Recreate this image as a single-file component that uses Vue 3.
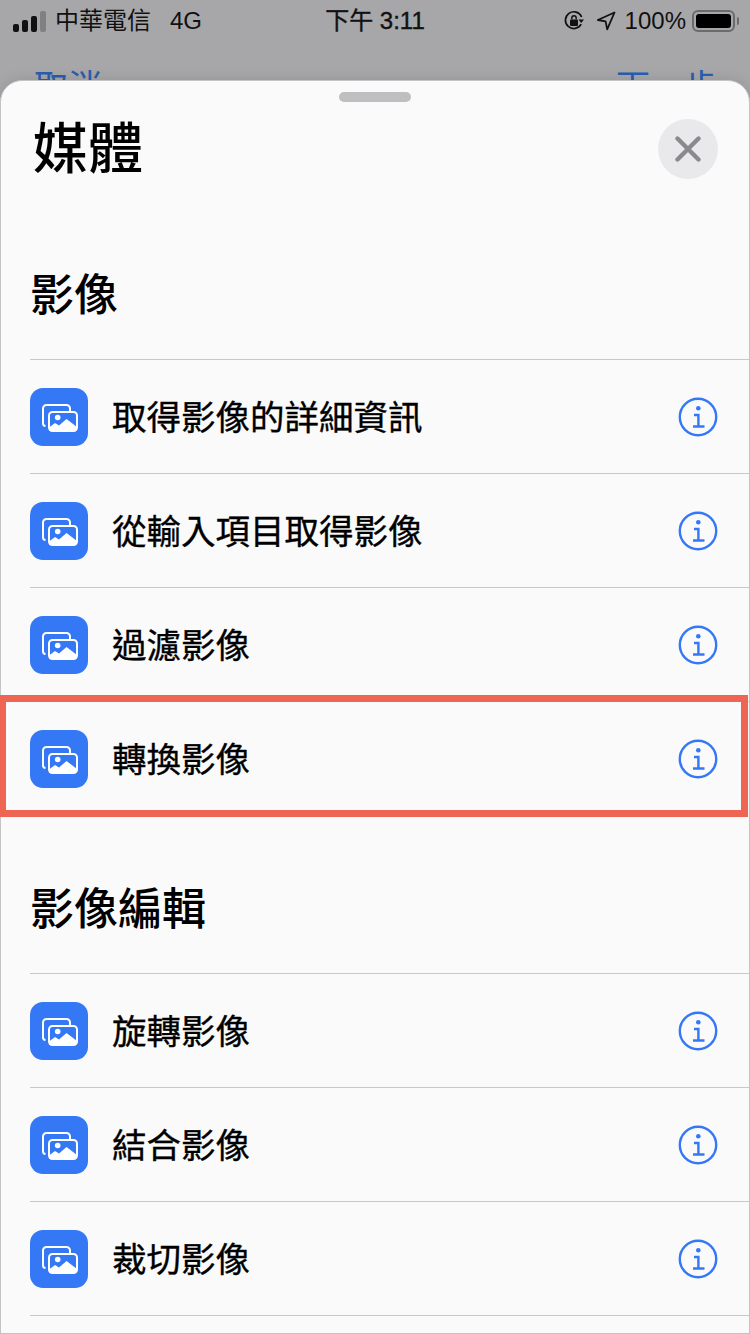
<script setup>
// Feuille "Média" : deux sections d'actions sur une page grisée
const sections = [
  { title: '影像', actions: ['取得影像的詳細資訊', '從輸入項目取得影像', '過濾影像', '轉換影像'] },
  { title: '影像編輯', actions: ['旋轉影像', '結合影像', '裁切影像'] },
]
</script>

<template>
  <div class="page">
    <div class="status">
      <div class="status-left">
        <div class="signal">
          <i class="b1"></i><i class="b2"></i><i class="b3"></i><i class="b4"></i>
        </div>
        <span class="carrier">中華電信</span>
        <span class="net">4G</span>
      </div>
      <div class="clock">下午 3:11</div>
      <div class="status-right">
        <svg class="lock" width="22" height="22" viewBox="0 0 22 22">
          <path d="M18.2 14.2A8.4 8.4 0 1 1 18.6 7" fill="none" stroke="#111" stroke-width="1.7" />
          <path d="M15.4 9.4h5.6l-2.8 3.6z" fill="#111" />
          <rect x="7" y="9.6" width="8" height="6.4" rx="1" fill="#111" />
          <path d="M8.8 9.6V8a2.2 2.2 0 0 1 4.4 0v1.6" fill="none" stroke="#111" stroke-width="1.4" />
        </svg>
        <svg class="arrow" width="20" height="20" viewBox="0 0 20 20">
          <path d="M18.5 1.5 1.8 9l7.8 1.4 1.6 8z" fill="none" stroke="#111" stroke-width="1.8" stroke-linejoin="round" />
        </svg>
        <span class="pct">100%</span>
        <div class="battery"><div class="level"></div></div>
        <div class="nub"></div>
      </div>
    </div>

    <div class="nav">
      <span>取消</span>
      <span>下一步</span>
    </div>

    <div class="sheet">
      <div class="handle"></div>
      <div class="sheet-head">
        <h1>媒體</h1>
        <button class="close">
          <svg width="26" height="26" viewBox="0 0 26 26">
            <path d="M2.5 2.5l21 21M23.5 2.5l-21 21" stroke="#8a8a8e" stroke-width="4.4" stroke-linecap="round" />
          </svg>
        </button>
      </div>

      <section v-for="s in sections" :key="s.title" class="section">
        <h2>{{ s.title }}</h2>
        <div v-for="a in s.actions" :key="a" class="row">
          <div class="app-icon">
            <svg width="38" height="30" viewBox="0 0 38 30">
              <path d="M5.500 24A2.800 2.800 0 0 1 3 21.200V6.500A3.500 3.500 0 0 1 6.500 3h20A3.500 3.500 0 0 1 30 6.500V9" fill="none" stroke="#fff" stroke-width="2" />
              <rect x="9" y="10" width="28" height="19" rx="3.500" fill="#3478f6" stroke="#fff" stroke-width="2" />
              <circle cx="17.700" cy="15.500" r="2.800" fill="#fff" />
              <path d="M9 29v-3.500l6-4.500 4 2.500 7.500-6.500L37 25v1a3 3 0 0 1-3 3z" fill="#fff" />
            </svg>
          </div>
          <span class="label">{{ a }}</span>
          <svg class="info" width="40" height="40" viewBox="0 0 40 40">
            <circle cx="20" cy="20" r="18.200" fill="none" stroke="#3478f6" stroke-width="2.400" />
            <circle cx="20.300" cy="11.300" r="2.300" fill="#3478f6" />
            <path d="M16 18h4.400v11M15 29.500h11.500" fill="none" stroke="#3478f6" stroke-width="2.400" />
          </svg>
        </div>
      </section>
    </div>

    <!-- Cadre rouge de mise en évidence, au-dessus de la liste -->
    <div class="highlight"></div>
  </div>
</template>

<style>
body {
  margin: 0;
  background: #a7a7a9;
}
</style>

<style scoped>
.page {
  position: relative;
  width: 750px;
  height: 1334px;
  overflow: hidden;
  background: #a7a7a9;
  font-family: "Liberation Sans", "Noto Sans CJK TC", sans-serif;
  color: #000;
}

.status {
  height: 42px;
  display: flex;
  align-items: center;
  justify-content: space-between;
  font-size: 24px;
  color: #111;
}

.status-left {
  width: 280px;
  display: flex;
  align-items: center;
  padding-left: 13px;
  box-sizing: border-box;
}

.signal {
  display: flex;
  align-items: flex-end;
  gap: 3px;
  height: 21px;
  margin-right: 9px;
}

.signal i {
  display: block;
  width: 6px;
  border-radius: 2px;
  background: #111;
}

.b1 { height: 8px; }
.b2 { height: 12px; }
.b3 { height: 16px; }
.b4 { height: 21px; background: #808082 !important; }

.carrier {
  font-family: "Noto Sans CJK TC", sans-serif;
  margin-right: 19px;
  margin-bottom: 5px;
}

.clock {
  font-size: 24px;
  white-space: nowrap;
  margin-bottom: 5px;
  -webkit-text-stroke: 0.4px #111;
}

.status-right {
  width: 280px;
  display: flex;
  align-items: center;
  justify-content: flex-end;
  padding-right: 11px;
  box-sizing: border-box;
}

.lock { margin-right: 11px; }
.arrow { margin-right: 9px; }
.pct { margin-right: 6px; font-size: 24px; }

.battery {
  width: 35px;
  height: 14px;
  padding: 2px;
  border: 2px solid #6b6b6d;
  border-radius: 6px;
  box-sizing: content-box;
}

.level {
  height: 100%;
  background: #000;
  border-radius: 3px;
}

.nub {
  width: 2px;
  height: 8px;
  margin-left: 2px;
  background: #6b6b6d;
  border-radius: 0 2px 2px 0;
}

.nav {
  height: 38px;
  overflow: hidden;
  display: flex;
  justify-content: space-between;
  align-items: flex-start;
  padding: 20px 32px 0 34px;
  box-sizing: border-box;
  font-family: "Noto Sans CJK TC", sans-serif;
  font-size: 34px;
  line-height: 46px;
  color: #2a5db0;
}

.sheet {
  height: 1254px;
  box-sizing: border-box;
  background: #fafafa;
  border: 1px solid #c4c4c6;
  border-radius: 22px 22px 0 0;
  box-shadow: 0 0 14px rgba(0, 0, 0, 0.12);
  position: relative;
}

.handle {
  width: 72px;
  height: 10px;
  margin: 11px auto 0;
  border-radius: 5px;
  background: #bfbfc1;
}

.sheet-head {
  display: flex;
  justify-content: space-between;
  align-items: flex-start;
  padding: 17px 31px 0 32px;
  height: 82px;
}

h1 {
  margin: 0;
  font-family: "Noto Sans CJK TC", sans-serif;
  font-size: 55px;
  line-height: 50px;
  font-weight: 500;
}

.close {
  width: 60px;
  height: 60px;
  padding: 0;
  border: none;
  border-radius: 50%;
  background: #e9e9eb;
  display: flex;
  align-items: center;
  justify-content: center;
}

.section {
  padding: 59px 0 0 29px;
}

h2 {
  margin: 0 0 35px;
  font-family: "Noto Sans CJK TC", sans-serif;
  font-size: 44px;
  line-height: 64px;
  font-weight: 500;
}

.row {
  height: 114px;
  border-top: 1px solid #c8c8ca;
  box-sizing: border-box;
  display: flex;
  align-items: center;
  padding-right: 31px;
}

.section:last-child .row:last-child {
  height: 115px;
  border-bottom: 1px solid #c8c8ca;
}

.app-icon {
  width: 58px;
  height: 58px;
  flex: none;
  border-radius: 13px;
  background: #3478f6;
  display: flex;
  align-items: center;
  justify-content: center;
}

.label {
  flex: 1;
  margin-left: 24px;
  padding-bottom: 4px;
  font-family: "Noto Sans CJK TC", sans-serif;
  font-size: 34.500px;
  font-weight: 400;
  -webkit-text-stroke: 0.35px #000;
}

.info {
  flex: none;
}

.highlight {
  position: absolute;
  left: 0;
  top: 695px;
  width: 748px;
  height: 122px;
  box-sizing: border-box;
  border: 7px solid #ee6554;
  border-left-width: 6px;
  pointer-events: none;
}
</style>
